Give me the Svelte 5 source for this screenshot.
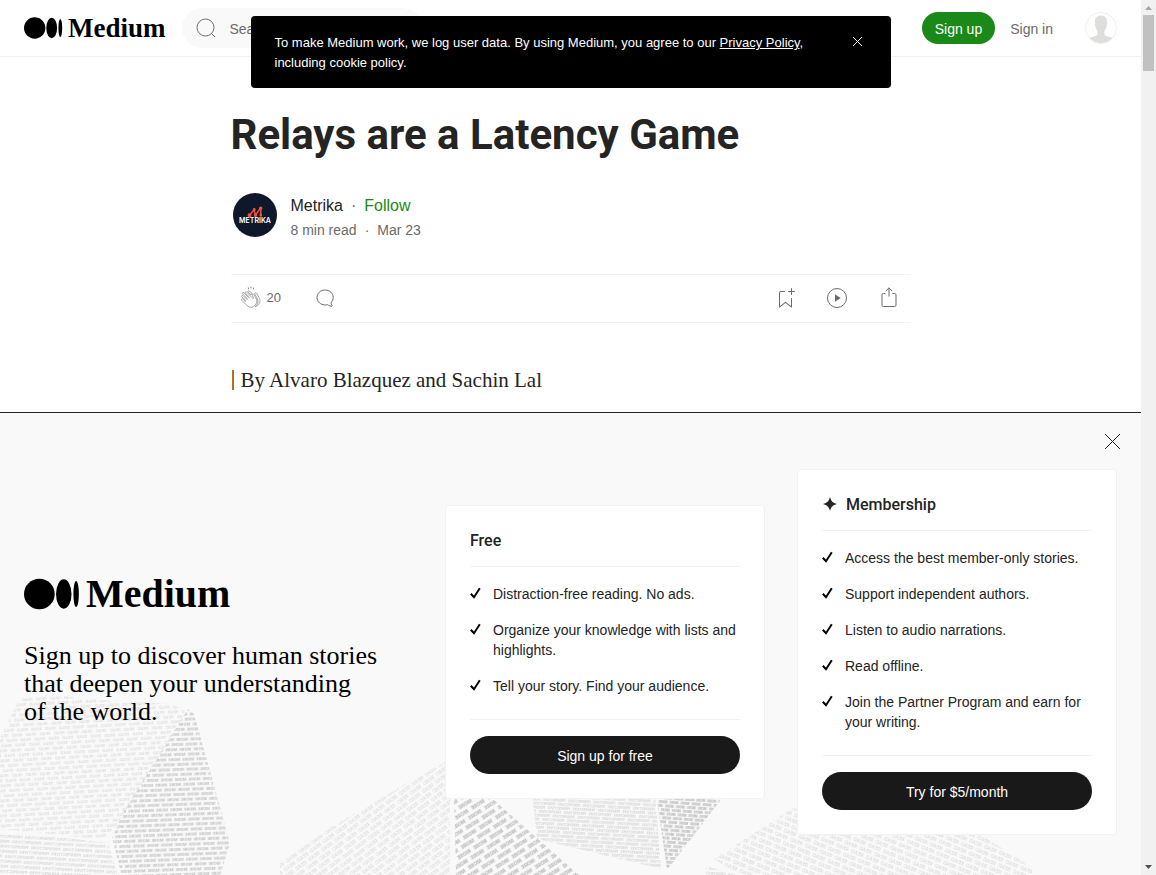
<script>
  const plans = [
    {
      name: 'Free',
      star: false,
      perks: [
        'Distraction-free reading. No ads.',
        'Organize your knowledge with lists and highlights.',
        'Tell your story. Find your audience.'
      ],
      action: 'Sign up for free'
    },
    {
      name: 'Membership',
      star: true,
      perks: [
        'Access the best member-only stories.',
        'Support independent authors.',
        'Listen to audio narrations.',
        'Read offline.',
        'Join the Partner Program and earn for your writing.'
      ],
      action: 'Try for $5/month'
    }
  ];

  // Word textures that fill the facets of the backdrop
  const textures = [
    { id: 'read-a', word: 'READ', turn: -3, w: 14, h: 5, size: 4, weight: 500, color: '#dadada' },
    { id: 'more-a', word: 'MORE', turn: -2, w: 14, h: 5, size: 4, weight: 800, color: '#c6c6c6' },
    { id: 'view-a', word: 'PERSPECTIVES', turn: 3, w: 32, h: 5, size: 4, weight: 600, color: '#d6d6d6' },
    { id: 'read-b', word: 'READ', turn: -36, w: 16, h: 6, size: 5, weight: 500, color: '#dcdcdc' },
    { id: 'more-b', word: 'MORE', turn: -32, w: 19, h: 7, size: 5, weight: 900, color: '#c2c2c2' },
    { id: 'view-b', word: 'PERSPECTIVES', turn: 3, w: 25, h: 4, size: 3, weight: 700, color: '#d2d2d2' },
    { id: 'more-c', word: 'MORE', turn: 4, w: 11, h: 4, size: 3, weight: 900, color: '#bcbcbc' },
    { id: 'read-c', word: 'READ', turn: 22, w: 16, h: 6, size: 5, weight: 500, color: '#dadada' }
  ];

  // Each tile holds several rows, shifted so that the words do not line up in columns
  const shifts = [0, 0.4, 0.75, 0.2, 0.6];

  const facets = [
    { fill: 'read-a', points: '20,285 62,283 100,287 172,291 186,299 168,328 112,420 100,426 0,416 0,325' },
    { fill: 'more-a', points: '188,296 194,301 230,430 220,463 122,463 112,425 124,398' },
    { fill: 'view-a', points: '0,421 20,421 56,424 108,430 118,463 0,463' },
    { fill: 'read-b', points: '280,450 330,415 400,374 450,346 450,463 280,463' },
    { fill: 'more-b', points: '454,380 486,380 580,463 456,463' },
    { fill: 'view-b', points: '532,380 655,380 661,456 600,441 537,426' },
    { fill: 'more-c', points: '656,380 726,380 667,457' },
    { fill: 'read-c', points: '793,395 980,421 1032,455 1032,463 740,463 714,446' },
    { fill: 'view-a', points: '706,453 740,463 706,463' }
  ];
</script>

<div class="screen">
  <div class="page">
    <header class="topbar">
      <a class="brand" href="#home">
        <svg viewBox="0 0 39 22" width="39" height="22" aria-hidden="true">
          <circle cx="10.7" cy="11" r="10.7" />
          <ellipse cx="27.7" cy="11" rx="5.4" ry="10.2" />
          <ellipse cx="36.3" cy="11" rx="1.9" ry="9.1" />
        </svg>
        <span>Medium</span>
      </a>
      <label class="search">
        <svg width="24" height="24" viewBox="0 0 24 24" fill="none" stroke="#6b6b6b" aria-hidden="true">
          <circle cx="11.5" cy="11.5" r="8.5" /><path d="M17.7 17.7 20.8 20.8" stroke-linecap="round" />
        </svg>
        <input type="search" placeholder="Search Medium" aria-label="Search Medium" />
      </label>
      <nav>
        <button class="signup">Sign up</button>
        <a class="signin" href="#signin">Sign in</a>
        <button class="account" aria-label="Account">
          <svg width="32" height="32" viewBox="0 0 32 32" aria-hidden="true">
            <clipPath id="round"><circle cx="16" cy="16" r="15.5" /></clipPath>
            <path clip-path="url(#round)" fill="#dededd" d="M16 3.500c4.300 0 6.300 2.800 6.100 7.400-.1 3.300-1.200 6.500-2.700 8.100v2.600c0 1.400 1 2.200 2.800 2.700l4.500 1.200c1.800.6 2.900 1.400 3.300 3V32H2v-3.500c.4-1.600 1.500-2.400 3.300-3l4.500-1.200c1.800-.5 2.800-1.300 2.800-2.700V19c-1.500-1.600-2.600-4.800-2.700-8.100-.2-4.600 1.800-7.400 6.100-7.400z" />
            <circle cx="16" cy="16" r="15.5" fill="none" stroke="#f0f0f0" />
          </svg>
        </button>
      </nav>
    </header>

    <div class="notice" role="status">
      <p>To make Medium work, we log user data. By using Medium, you agree to our <a href="#privacy">Privacy Policy</a>, including cookie policy.</p>
      <button aria-label="Dismiss">
        <svg width="19" height="19" viewBox="0 0 19 19" stroke="#fff" aria-hidden="true"><path d="M5 4l9 9M14 4l-9 9" /></svg>
      </button>
    </div>

    <article>
      <h1>Relays are a Latency Game</h1>
      <div class="author">
        <svg width="44" height="44" viewBox="0 0 44 44" role="img" aria-label="Metrika">
          <circle cx="22" cy="22" r="22" fill="#0e172b" />
          <g stroke="#ee5340" stroke-width="1.5" fill="#ee5340">
            <path fill="none" d="M16.500 22.300 21 16.800 22.500 22 27.500 15.200M27.800 15.500v7" />
            <circle cx="16.500" cy="22.300" r="1.200" /><circle cx="21.200" cy="16.500" r=".8" />
            <circle cx="22.500" cy="22.200" r="1" /><circle cx="27.700" cy="15.200" r="1" /><circle cx="27.800" cy="22.300" r=".7" />
          </g>
          <text x="22" y="30" text-anchor="middle" class="badge">METRIKA</text>
        </svg>
        <div>
          <p class="who"><a href="#metrika">Metrika</a><span>·</span><a class="follow" href="#follow">Follow</a></p>
          <p class="when">8 min read<span>·</span>Mar 23</p>
        </div>
      </div>

      <div class="actions">
        <button class="clap" aria-label="Clap, 20">
          <svg width="24" height="24" viewBox="0 0 24 24" fill="none" stroke="#6b6b6b" stroke-width=".6" aria-hidden="true">
            <path stroke="none" fill="#6b6b6b" d="M11.370.83L12 3.280l.63-2.450h-1.260zM15.420 1.840l-1.180-.39-.34 2.500 1.520-2.100zM9.760 1.450l-1.190.4 1.530 2.100-.34-2.500z" />
            <path d="M20.250 11.840l-2.500-4.400a1.420 1.420 0 0 0-.93-.64.96.96 0 0 0-.75.18c-.25.19-.4.42-.45.7l2.400 4.180c1.620 2.950 1.100 5.780-1.520 8.400l-.46.41c1-.13 1.930-.6 2.780-1.450 2.700-2.700 2.510-5.590 1.430-7.380zM12.070 9.010c-.13-.69.08-1.300.57-1.770l-2.060-2.070a1.120 1.120 0 0 0-1.560 0c-.15.15-.22.34-.27.53L12.070 9z" />
            <path d="M14.740 8.300a1.130 1.130 0 0 0-.73-.5.67.67 0 0 0-.53.13c-.15.12-.59.46-.2 1.300l1.180 2.500a.45.45 0 0 1-.23.76.44.44 0 0 1-.48-.25L7.600 6.110a.82.82 0 1 0-1.150 1.150l3.640 3.640a.45.45 0 1 1-.63.63L5.830 7.900 4.800 6.860a.82.82 0 0 0-1.330.9c.04.1.1.18.18.26l1.020 1.030 3.650 3.640a.44.44 0 0 1-.15.73.44.44 0 0 1-.48-.1L4.050 9.680a.82.82 0 0 0-1.400.57.81.81 0 0 0 .24.58l1.530 1.540 2.300 2.280a.45.45 0 0 1-.64.63L3.800 13a.81.81 0 0 0-1.390.57c0 .22.09.43.24.58l4.400 4.400c2.800 2.800 5.500 4.120 8.680.94 2.270-2.280 2.710-4.600 1.340-7.100l-2.320-4.080z" />
          </svg>
          <span>20</span>
        </button>
        <button aria-label="Respond">
          <svg width="24" height="24" viewBox="0 0 24 24" fill="none" stroke="#6b6b6b" aria-hidden="true">
            <path d="M18 16.800a7.140 7.140 0 0 0 2.240-5.320c0-4.120-3.530-7.480-8.050-7.480C7.670 4 4 7.360 4 11.480c0 4.130 3.670 7.480 8.200 7.480a8.900 8.900 0 0 0 2.380-.32c.23.2.48.39.75.56 1.060.69 2.200 1.040 3.400 1.040.22 0 .4-.11.48-.29a.5.5 0 0 0-.04-.52 6.400 6.400 0 0 1-1.160-2.650z" />
          </svg>
        </button>
        <span class="fill"></span>
        <button aria-label="Save">
          <svg width="24" height="24" viewBox="0 0 24 24" fill="#6b6b6b" aria-hidden="true">
            <path d="M18 2.500a.5.5 0 0 1 1 0V5h2.500a.5.5 0 0 1 0 1H19v2.500a.5.5 0 1 1-1 0V6h-2.500a.5.5 0 0 1 0-1H18V2.500zM7 7a1 1 0 0 1 1-1h3.500a.5.5 0 0 0 0-1H8a2 2 0 0 0-2 2v14a.5.5 0 0 0 .8.4l5.700-4.400 5.700 4.400a.5.5 0 0 0 .8-.4v-8.500a.5.5 0 0 0-1 0v7.480l-5.200-4a.5.5 0 0 0-.6 0l-5.200 4V7z" />
          </svg>
        </button>
        <button aria-label="Listen">
          <svg width="24" height="24" viewBox="0 0 24 24" aria-hidden="true">
            <circle cx="12" cy="12" r="9.500" fill="none" stroke="#6b6b6b" /><path d="M10 8.300v7.400l5.700-3.700z" fill="#6b6b6b" />
          </svg>
        </button>
        <button aria-label="Share">
          <svg width="24" height="24" viewBox="0 0 24 24" fill="none" stroke="#6b6b6b" stroke-linecap="round" stroke-linejoin="round" aria-hidden="true">
            <path d="M12 10.200V2.200M9.100 4.800 12 1.900l2.900 2.900M8 7.500H6.300A1.300 1.300 0 0 0 5 8.800v10.400a1.300 1.300 0 0 0 1.300 1.300h11.400a1.300 1.300 0 0 0 1.300-1.300V8.800a1.300 1.300 0 0 0-1.300-1.300H16" />
          </svg>
        </button>
      </div>

      <p class="byline">By Alvaro Blazquez and Sachin Lal</p>
    </article>

    <section class="offer" aria-label="Sign up">
      <svg class="backdrop" width="1141" height="462" viewBox="0 0 1141 462" aria-hidden="true">
        <defs>
          {#each textures as t}
            <pattern id={t.id} width={t.w} height={t.h * shifts.length} patternUnits="userSpaceOnUse" patternTransform="rotate({t.turn}) scale(-1 1)">
              <g font-size={t.size} font-weight={t.weight} fill={t.color}>
                {#each shifts as s, i}
                  <text x={s * t.w} y={(i + 1) * t.h - 1}>{t.word}</text>
                  {#if s > 0}
                    <text x={(s - 1) * t.w} y={(i + 1) * t.h - 1}>{t.word}</text>
                  {/if}
                {/each}
              </g>
            </pattern>
          {/each}
        </defs>
        {#each facets as f}
          <polygon points={f.points} fill="url(#{f.fill})" />
        {/each}
      </svg>
      <button class="close" aria-label="Close">
        <svg width="17" height="17" viewBox="0 0 17 17" stroke="#242424" aria-hidden="true"><path d="M1 1l15 15M16 1L1 16" /></svg>
      </button>
      <div class="pitch">
        <div class="brand large">
          <svg viewBox="0 0 39 22" width="56" height="32" aria-hidden="true">
            <circle cx="10.700" cy="11" r="10.700" />
            <ellipse cx="27.700" cy="11" rx="5.400" ry="10.200" />
            <ellipse cx="36.300" cy="11" rx="1.900" ry="9.100" />
          </svg>
          <span>Medium</span>
        </div>
        <h2>Sign up to discover human stories<br />that deepen your understanding<br />of the world.</h2>
      </div>
      {#each plans as plan}
        <div class="card">
          <h3>
            {#if plan.star}
              <svg width="16" height="16" viewBox="0 0 16 16" fill="#242424" aria-hidden="true"><path d="M8 0c1.300 4.500 2.400 5.500 7 7-4.600 1.500-5.700 2.500-7 7C6.700 9.500 5.600 8.500 1 7c4.600-1.500 5.700-2.500 7-7z" /></svg>
            {/if}
            {plan.name}
          </h3>
          <ul>
            {#each plan.perks as perk}
              <li>
                <svg width="11" height="20" viewBox="0 0 11 20" fill="none" stroke="#000" stroke-width="2" aria-hidden="true"><path d="M.8 9.800 4 13.200 9.800 4.200" /></svg>
                <span>{perk}</span>
              </li>
            {/each}
          </ul>
          <button>{plan.action}</button>
        </div>
      {/each}
    </section>
  </div>

  <div class="scroll" aria-hidden="true">
    <svg width="15" height="15" viewBox="0 0 15 15"><path d="M4 10h7L7.500 6z" fill="#a3a3a3" /></svg>
    <span></span>
    <svg width="15" height="15" viewBox="0 0 15 15"><path d="M4 5h7L7.500 9z" fill="#505050" /></svg>
  </div>
</div>

<style>
  :global(body) { margin: 0; background: #fff; }
  .screen {
    display: grid;
    grid-template-columns: 1fr 15px;
    height: 100vh;
    font-family: "Liberation Sans", Arial, sans-serif;
    font-size: 14px;
    line-height: 20px;
    color: #242424;
  }
  .page { position: relative; overflow: hidden; }
  svg { display: block; flex: none; }
  p, h1, h2, h3, ul { margin: 0; padding: 0; }
  button { font: inherit; border: 0; padding: 0; background: none; color: inherit; cursor: pointer; }
  a { color: inherit; text-decoration: none; }

  .topbar {
    display: flex;
    align-items: center;
    height: 56px;
    padding: 0 24px;
    border-bottom: 1px solid #f2f2f2;
  }
  .brand {
    display: flex;
    align-items: center;
    gap: 5px;
    font-family: "Liberation Serif", "Times New Roman", serif;
    font-weight: 700;
    font-size: 27px;
    line-height: 28px;
    color: #000;
  }
  .brand.large { gap: 6px; font-size: 40px; line-height: 32px; }
  .search {
    display: flex;
    align-items: center;
    gap: 12px;
    width: 240px;
    height: 40px;
    box-sizing: border-box;
    margin-left: 16px;
    padding-left: 12px;
    border-radius: 20px;
    background: #f9f9f9;
  }
  .search input {
    width: 100%;
    min-width: 0;
    border: 0;
    padding: 2px 0 0;
    outline: 0;
    background: none;
    font: inherit;
  }
  .search input::placeholder { color: #6b6b6b; opacity: 1; }
  nav { display: flex; align-items: center; margin-left: auto; color: #6b6b6b; }
  .signup {
    height: 32px;
    padding: 2px 13px 0;
    border-radius: 16px;
    background: #1a8917;
    color: #fff;
  }
  .signin { margin: 0 32px 0 15px; padding-top: 2px; }

  .notice {
    position: absolute;
    z-index: 2;
    top: 16px;
    left: 50%;
    transform: translateX(-50%);
    display: flex;
    justify-content: space-between;
    align-items: flex-start;
    width: 640px;
    max-width: 100%;
    box-sizing: border-box;
    padding: 17px 24px 15px;
    border-radius: 4px;
    background: #000;
    color: #fff;
    font-size: 13px;
  }
  .notice p { max-width: 536px; }
  .notice a { text-decoration: underline; }

  article { max-width: 680px; margin: 0 auto; padding-top: 52px; }
  h1 { font-family: Roboto, sans-serif; font-size: 42px; line-height: 52px; font-weight: 700; }
  .author { display: flex; align-items: flex-start; gap: 14px; margin: 32px 2px 0; }
  .author div { padding-top: 1px; }
  .badge { font: 600 7px Inter, sans-serif; fill: #fff; }
  .who { font-size: 16px; line-height: 24px; }
  .when { line-height: 24px; color: #6b6b6b; }
  .who span, .when span { margin: 0 8px; color: #6b6b6b; }
  .follow { color: #1a8917; }
  .actions {
    display: flex;
    align-items: center;
    gap: 28px;
    height: 46px;
    margin-top: 32px;
    padding: 0 10px 1px 8px;
    border: solid #f2f2f2;
    border-width: 1px 0;
  }
  .clap { display: flex; align-items: center; gap: 4px; padding-right: 4px; font-size: 13px; color: #6b6b6b; }
  .fill { flex: 1; }
  .byline {
    margin: 47px 1px 0;
    padding-left: 7px;
    border-left: 2px solid #b5701d;
    font-family: "Liberation Serif", "Times New Roman", serif;
    font-size: 21px;
    line-height: 20px;
  }

  .offer {
    position: absolute;
    left: 0;
    right: 0;
    bottom: 0;
    display: flex;
    align-items: center;
    gap: 32px;
    padding: 56px 24px 40px;
    border-top: 1px solid #242424;
    background: #f9f9f9;
    overflow: hidden;
  }
  .backdrop {
    position: absolute;
    left: 0;
    bottom: 0;
    font-family: Inter, sans-serif;
  }
  .close { position: absolute; top: 20px; right: 20px; }
  .pitch { position: relative; flex: 1; color: #000; }
  h2 {
    margin-top: 32px;
    font-family: "Liberation Serif", "Times New Roman", serif;
    font-size: 26px;
    line-height: 28px;
    font-weight: 400;
    white-space: nowrap;
  }
  .card {
    position: relative;
    width: 320px;
    box-sizing: border-box;
    padding: 25px 24px 24px;
    border: 1px solid #f2f2f2;
    border-radius: 4px;
    background: #fff;
  }
  h3 {
    display: flex;
    align-items: center;
    gap: 8px;
    padding-bottom: 15px;
    border-bottom: 1px solid #f2f2f2;
    font-family: Roboto, sans-serif;
    font-size: 16px;
    line-height: 20px;
    font-weight: 500;
  }
  ul {
    display: grid;
    gap: 16px;
    padding: 17px 0 23px;
    border-bottom: 1px solid #f2f2f2;
    list-style: none;
  }
  li { display: flex; gap: 12px; }
  .card button {
    width: 100%;
    height: 38px;
    margin-top: 16px;
    padding-top: 2px;
    border-radius: 19px;
    background: #191919;
    color: #fff;
  }

  .scroll {
    display: flex;
    flex-direction: column;
    background: #f1f1f1;
  }
  .scroll span { width: 11px; height: 56px; margin: 0 2px auto; background: #c1c1c1; }
</style>
